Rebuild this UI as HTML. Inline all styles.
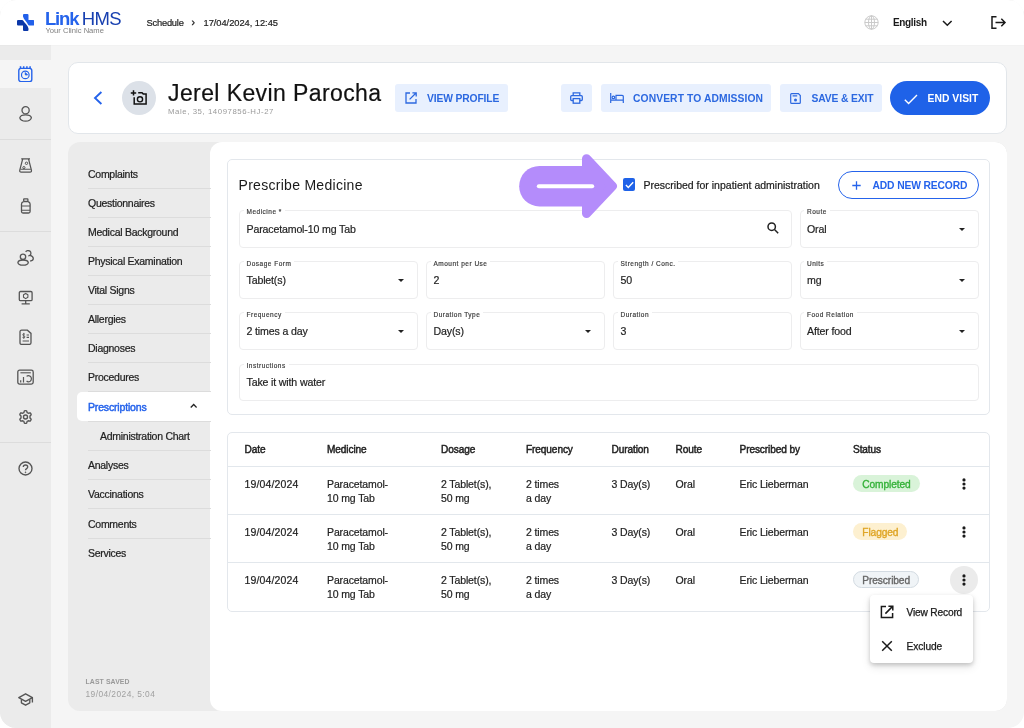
<!DOCTYPE html>
<html lang="en">
<head>
<meta charset="utf-8">
<title>Link HMS - Prescribe Medicine</title>
<style>
*{box-sizing:border-box;margin:0;padding:0}
html,body{width:1024px;height:728px;overflow:hidden;background:#fff}
body{font-family:"Liberation Sans",sans-serif;color:#1f1f1f;position:relative}
.abs{position:absolute}
#app{will-change:transform;position:absolute;left:0;top:0;width:1024px;height:728px;background:#f5f5f5;border-radius:16px;overflow:hidden}
#topbar{position:absolute;left:0;top:0;width:1024px;height:45px;background:#fff;z-index:2;box-shadow:0 0 1px rgba(0,0,0,.08)}
#rail{position:absolute;left:0;top:44px;width:51px;height:684px;background:#ebebeb}
#rail .active{position:absolute;left:0;top:15.8px;width:51px;height:28px;background:#f5f5f5}
#rail .sep{position:absolute;left:0;width:51px;height:1px;background:#dcdcdc}
#rail svg{position:absolute}
.t{position:absolute;white-space:nowrap;line-height:1}
#hcard{position:absolute;left:68px;top:62px;width:939px;height:71.5px;background:#fff;border:1px solid #e2e6ea;border-radius:10px}
#main{position:absolute;left:68px;top:142px;width:939px;height:569px;background:#ebebeb;border-radius:12px;overflow:hidden}
#content{position:absolute;left:142.4px;top:0;width:796.6px;height:569px;background:#fff;border-radius:12px}
.nav{position:absolute;left:88px;margin-top:.3px;font-size:10.5px;line-height:1;white-space:nowrap;color:#1f1f1f;letter-spacing:-.27px;-webkit-text-stroke:.22px #1f1f1f}
.navsep{position:absolute;left:88px;width:123px;height:1px;background:#dcdcdc}
.btn{position:absolute;height:28.5px;top:83.5px;background:#e8f0fe;border-radius:3px;color:#2c68e0;font-weight:bold;font-size:10.3px}
.card{position:absolute;left:227px;width:763px;background:#fff;border:1px solid #e3e7ec;border-radius:5px}
.fld{position:absolute;height:37.5px;border:1px solid #ededee;border-radius:4px;background:#fff}
.fld .lb{position:absolute;left:3.5px;top:-2.7px;padding:0 3px;background:#fff;font-size:6.5px;line-height:8px;color:#3a3a3a;white-space:nowrap;letter-spacing:.5px;-webkit-text-stroke:.18px #3a3a3a}
.fld .v{position:absolute;left:6.5px;top:11.8px;font-size:10.6px;line-height:12px;white-space:nowrap;color:#1f1f1f;letter-spacing:-.15px;-webkit-text-stroke:.2px #1f1f1f}
.fld .dd{position:absolute;right:12.6px;top:16.8px;width:0;height:0;border-left:3.8px solid transparent;border-right:3.8px solid transparent;border-top:3.7px solid #222}
.th{position:absolute;top:444.6px;font-size:10.1px;letter-spacing:-.1px;-webkit-text-stroke:.45px #222;line-height:1;white-space:nowrap;color:#222}
.td{position:absolute;margin-top:.4px;font-size:10.5px;line-height:14.25px;white-space:nowrap;color:#222;letter-spacing:-.12px;-webkit-text-stroke:.2px #222}
.rowsep{position:absolute;left:228px;width:761px;height:1px;background:#e2e7ec}
.chip{position:absolute;height:17px;border-radius:8.5px;font-size:10.2px;line-height:19.4px;padding:0 9.3px;white-space:nowrap;letter-spacing:-.1px}
</style>
</head>
<body>
<div id="app">
<div id="topbar">
<svg class="abs" style="left:17px;top:14px" width="17.2" height="17" viewBox="0 0 17.2 17"><path d="M6 1.1 Q6 0 7.1 0 H10.4 Q11.5 0 11.5 1.1 V5.9 H16.1 Q17.2 5.9 17.2 7 V10.5 Q17.2 11.6 16.1 11.6 H12.3 Q11.4 11.6 11 10.6 C10 8 6.4 5.5 6 2.6 Z" fill="#2160ea"/><path d="M1.1 5.9 H5.1 Q5.9 5.9 6.3 6.7 C7.5 9 11 11.3 11.5 14.4 V15.9 Q11.5 17 10.4 17 H7.1 Q6 17 6 15.9 V11.6 H1.1 Q0 11.6 0 10.5 V7 Q0 5.9 1.1 5.9 Z" fill="#0a37a8"/></svg>
<div class="t" style="left:45px;top:8.5px;font-size:18.5px;line-height:20px;font-weight:bold;color:#2563eb;letter-spacing:-1.2px">Link<span style="font-weight:normal;color:#1840b0;margin-left:3.4px;letter-spacing:-0.6px">HMS</span></div>
<div class="t" style="left:45.5px;top:26.5px;font-size:7.6px;line-height:8px;color:#808080">Your Clinic Name</div>
<div class="t" style="left:146.5px;top:17.5px;font-size:9.3px;line-height:10px;color:#222;letter-spacing:-.2px;-webkit-text-stroke:.2px #222">Schedule</div>
<div class="t" style="left:191.6px;top:15.9px;font-size:10.5px;line-height:12px;color:#222;-webkit-text-stroke:.3px #222">›</div>
<div class="t" style="left:203.5px;top:17.5px;font-size:9.3px;line-height:10px;color:#222;letter-spacing:-.03px;-webkit-text-stroke:.2px #222">17/04/2024, 12:45</div>
<svg class="abs" style="left:864px;top:15px" width="15" height="15" viewBox="0 0 15 15" fill="none" stroke="#c8c8c8" stroke-width="0.95"><circle cx="7.5" cy="7.5" r="6.7"/><ellipse cx="7.5" cy="7.5" rx="3" ry="6.7"/><path d="M0.8 7.5 H14.2 M1.7 4.2 H13.3 M1.7 10.8 H13.3 M7.5 0.8 V14.2"/></svg>
<div class="t" style="left:893px;top:17px;font-size:10px;line-height:11px;font-weight:bold;color:#1a1a1a;letter-spacing:-.35px">English</div>
<svg class="abs" style="left:942px;top:20px" width="11" height="7" viewBox="0 0 11 7" fill="none" stroke="#1a1a1a" stroke-width="1.5"><path d="M1 1 L5.3 5.3 L9.6 1"/></svg>
<svg class="abs" style="left:990px;top:15px" width="17" height="15" viewBox="0 0 17 15" fill="none" stroke="#1a1a1a" stroke-width="1.5"><path d="M6.5 1.7 H2 V13.3 H6.5"/><path d="M5.5 7.5 H15 M11.3 3.8 L15 7.5 L11.3 11.2"/></svg>
</div>
<div id="rail"><div class="active"></div>
<div class="sep" style="top:95px"></div><div class="sep" style="top:187px"></div><div class="sep" style="top:398px"></div>
<!-- schedule -->
<svg style="left:18.4px;top:21.7px" width="14.6" height="16.6" viewBox="0 0 14.6 16.6" fill="none" stroke="#2563eb" stroke-width="1.4"><rect x="0.8" y="2.4" width="13" height="13.2" rx="2.2"/><path d="M2.5 0.2 V3 M5.7 0.2 V3 M8.9 0.2 V3 M12.1 0.2 V3" stroke-width="1.5"/><circle cx="7.3" cy="8.9" r="3.8" stroke-width="1.2"/><path d="M7.3 6.6 V8.9 H9.5 Z" stroke-width="1" fill="#2563eb"/></svg>
<!-- person -->
<svg style="left:19px;top:62px" width="13.4" height="16" viewBox="0 0 13.4 16" fill="none" stroke="#555" stroke-width="1.3"><circle cx="6.6" cy="4.3" r="3.6"/><path d="M0.8 11.8 C1.4 9.6 4 8.9 6.6 8.9 C9.2 8.9 11.8 9.6 12.4 11.8 C11.8 14 9.2 15.1 6.6 15.1 C4 15.1 1.4 14 0.8 11.8 Z"/></svg>
<!-- flask -->
<svg style="left:19px;top:114px" width="14" height="15" viewBox="0 0 14 15" fill="none" stroke="#555" stroke-width="1.25"><path d="M2.2 0.9 H11"/><path d="M3.7 0.9 L0.8 12.2 Q0.4 14.2 2.2 14.2 H11 Q12.8 14.2 12.4 12.2 L9.5 0.9"/><path d="M1.4 11.3 H11.8" stroke-width="1.1"/><circle cx="7.5" cy="5.3" r="1.2" stroke-width="1"/><circle cx="4.9" cy="9.6" r="1.1" stroke-width="1"/></svg>
<!-- bottle -->
<svg style="left:20px;top:152.5px" width="11.6" height="17" viewBox="0 0 11.6 17" fill="none" stroke="#555" stroke-width="1.3"><rect x="3.7" y="1.9" width="4.2" height="2.6" rx="0.5"/><path d="M3.7 4.7 C2.4 5 1.5 5.7 1.5 7.1 V14.5 Q1.5 16 3 16 H8.6 Q10.1 16 10.1 14.5 V7.1 C10.1 5.7 9.2 5 7.9 4.7"/><path d="M1.5 9 H10.1 M1.5 13.2 H10.1" stroke-width="1.1"/></svg>
<!-- people -->
<svg style="left:17px;top:205.5px" width="17.4" height="16" viewBox="0 0 17.4 16" fill="none" stroke="#555" stroke-width="1.3"><circle cx="6" cy="6.8" r="2.7"/><path d="M0.9 12.6 C1.2 10.6 3.4 10 6 10 C8.6 10 11 10.6 11.3 12.6 C11 14.4 8.6 15.2 6 15.2 C3.4 15.2 1.2 14.4 0.9 12.6 Z"/><path d="M8.7 1.8 C9.5 0.5 11.6 0.2 12.9 1.1 C14.3 2.2 14.2 4.3 13 5.3 C12.5 5.7 11.9 5.9 11.3 5.9"/><path d="M13 5.3 C14.8 5.7 16.3 7 16.3 8.6 C16.3 10 14.8 10.9 13.2 11"/></svg>
<!-- monitor -->
<svg style="left:18px;top:244.5px" width="15.4" height="16" viewBox="0 0 15.4 16" fill="none" stroke="#555" stroke-width="1.3"><rect x="1.3" y="2.5" width="12.8" height="9.2" rx="1.2"/><path d="M7.7 11.8 V14.6 M3.6 14.8 H11.8"/><path d="M7.7 4.4 L9.9 5.7 V8.3 L7.7 9.6 L5.5 8.3 V5.7 Z" stroke-width="1.1" stroke-linejoin="round"/></svg>
<!-- invoice -->
<svg style="left:19px;top:284.5px" width="13.4" height="16.4" viewBox="0 0 13.4 16.4" fill="none" stroke="#555" stroke-width="1.3"><path d="M2.6 1.2 H8.4 L12 4.4 V13.8 Q12 15.4 10.4 15.4 H2.6 Q1 15.4 1 13.8 V2.8 Q1 1.2 2.6 1.2 Z"/><path d="M7.6 6 H10 M7.6 8.4 H10 M3.6 12 H10" stroke-width="1.1"/><path d="M5.8 5.2 C5.2 4.7 3.7 4.8 3.7 5.8 C3.7 7 5.9 6.6 5.9 7.9 C5.9 8.9 4.3 9.1 3.5 8.4 M4.8 3.9 V9.8" stroke-width="0.9"/></svg>
<!-- chart -->
<svg style="left:17px;top:324.5px" width="17" height="16.4" viewBox="0 0 17 16.4" fill="none" stroke="#555" stroke-width="1.3"><rect x="0.8" y="1.1" width="15.4" height="14" rx="1.8"/><path d="M3.4 3.8 H13.8" stroke-width="1.1"/><path d="M3.7 11.2 V13.4 M6.5 8 V13.4" stroke-width="1.2"/><path d="M9.6 7.4 C10.4 6.6 12 6.4 13.2 7.2 C14.8 8.4 14.8 11 13.2 12.2 C12 13 10.4 12.8 9.6 12" stroke-width="1.2"/></svg>
<!-- gear -->
<svg style="left:18px;top:364.5px" width="15" height="16" viewBox="0 0 24 24" fill="none" stroke="#555" stroke-width="2.2"><circle cx="12" cy="12" r="3.2"/><path d="M10.2 2.2 Q12 1.4 13.8 2.2 L14.6 4.9 L16.6 6 L19.3 5.3 Q20.9 6.5 21.1 8.4 L19.2 10.5 V13.5 L21.1 15.6 Q20.9 17.5 19.3 18.7 L16.6 18 L14.6 19.1 L13.8 21.8 Q12 22.6 10.2 21.8 L9.4 19.1 L7.4 18 L4.7 18.7 Q3.1 17.5 2.9 15.6 L4.8 13.5 V10.5 L2.9 8.4 Q3.1 6.5 4.7 5.3 L7.4 6 L9.4 4.9 Z" stroke-linejoin="round"/></svg>
<!-- help -->
<svg style="left:18px;top:417px" width="15" height="15" viewBox="0 0 15 15" fill="none" stroke="#555" stroke-width="1.35"><circle cx="7.5" cy="7.5" r="6.5"/><path d="M5.3 6 C5.3 3.3 9.7 3.3 9.7 6 C9.7 7.6 7.5 7.6 7.5 9.3" /><circle cx="7.5" cy="11.3" r="0.5" fill="#555" stroke-width="0.6"/></svg>
<!-- cap -->
<svg style="left:18px;top:649px" width="16" height="13" viewBox="0 0 16 13" fill="none" stroke="#555" stroke-width="1.35" stroke-linejoin="round"><path d="M7.6 0.8 L14.4 4.6 L7.6 8.4 L0.8 4.6 Z"/><path d="M3.4 6.4 V9.8 L7.6 12.2 L11.8 9.8 V6.4"/><path d="M14.4 4.8 V9.4"/></svg>
</div>
<div id="hcard"></div>
<svg class="abs" style="left:93px;top:91px" width="10" height="14" viewBox="0 0 10 14" fill="none" stroke="#2563eb" stroke-width="1.9"><path d="M8.4 1 L2 7 L8.4 13"/></svg>
<div class="abs" style="left:122.3px;top:80.7px;width:34px;height:34px;border-radius:50%;background:#dce1e8"></div>
<svg class="abs" style="left:130px;top:89px" width="18" height="17" viewBox="0 0 18 17" fill="none" stroke="#111" stroke-width="1.5"><path d="M3.5 1.2 V6.6 M0.8 3.9 H6.2"/><path d="M4.2 8.2 V14.9 H16.1 V4.9 H13.2 L12 3.8 H8.2"/><circle cx="10" cy="10.3" r="2.6" stroke-width="1.4"/></svg>
<div class="t" style="left:168px;top:79.2px;font-size:23px;line-height:28px;color:#111;letter-spacing:.4px;-webkit-text-stroke:.2px #111">Jerel Kevin Parocha</div>
<div class="t" style="left:168px;top:107px;font-size:7.8px;line-height:9px;color:#9a9a9a;letter-spacing:.57px">Male, 35, 14097856-HJ-27</div>
<div class="btn" style="left:395px;width:113px"><svg class="abs" style="left:10px;top:8.5px" width="12" height="12" viewBox="0 0 12 12" fill="none" stroke="#2c68e0" stroke-width="1.3"><path d="M5 1 H1 V11 H11 V7"/><path d="M7.4 0.8 H11.2 V4.6 M11 1 L4.6 7.4"/></svg><span class="t" style="left:32px;top:10.2px;letter-spacing:-.13px">VIEW PROFILE</span></div>
<div class="btn" style="left:561px;width:31px"><svg class="abs" style="left:9px;top:8.5px" width="13" height="12" viewBox="0 0 13 12" fill="none" stroke="#2c68e0" stroke-width="1.3"><path d="M3.2 3.6 V0.8 H9.8 V3.6"/><rect x="0.7" y="3.7" width="11.6" height="4.8" rx="1"/><rect x="3.2" y="6.6" width="6.6" height="4.6" fill="#e8f0fe"/></svg></div>
<div class="btn" style="left:601px;width:170px"><svg class="abs" style="left:9px;top:9.5px" width="14" height="10" viewBox="0 0 14 10" fill="none" stroke="#2c68e0" stroke-width="1.2"><path d="M0.7 0 V10 M0.7 7.2 H13.3 V10 M13.3 7.2 V3.6 Q13.3 2.4 12.1 2.4 H6 V7"/><circle cx="3.4" cy="4.4" r="1.3"/></svg><span class="t" style="left:32px;top:10.2px;letter-spacing:.1px">CONVERT TO ADMISSION</span></div>
<div class="btn" style="left:779.5px;width:102.5px"><svg class="abs" style="left:10px;top:9px" width="11" height="11" viewBox="0 0 11 11" fill="none" stroke="#2c68e0" stroke-width="1.2"><path d="M0.7 1.6 Q0.7 0.7 1.6 0.7 H8.4 L10.3 2.6 V9.4 Q10.3 10.3 9.4 10.3 H1.6 Q0.7 10.3 0.7 9.4 Z"/><path d="M2.6 2.9 H7.2" stroke-width="1.4"/><circle cx="5.5" cy="6.9" r="1.5" fill="#2c68e0" stroke="none"/></svg><span class="t" style="left:32px;top:10.2px;letter-spacing:-.12px">SAVE &amp; EXIT</span></div>
<div class="abs" style="left:890px;top:80.5px;width:100px;height:34.5px;border-radius:18px;background:#1f62e8"><svg class="abs" style="left:13.5px;top:13px" width="14" height="11" viewBox="0 0 14 11" fill="none" stroke="#fff" stroke-width="1.4"><path d="M0.8 5.8 L4.6 9.4 L13 1"/></svg><span class="t" style="left:37.5px;top:13.2px;color:#fff;font-weight:bold;font-size:10.3px;letter-spacing:.06px">END VISIT</span></div>
<div id="main"><div id="content"></div></div>
<div class="abs" style="left:76.5px;top:392px;width:140px;height:29px;background:#fff;border-radius:5px"></div>
<div class="nav" style="top:168.6px">Complaints</div>
<div class="nav" style="top:197.6px">Questionnaires</div>
<div class="nav" style="top:226.6px">Medical Background</div>
<div class="nav" style="top:255.4px">Physical Examination</div>
<div class="nav" style="top:284.6px">Vital Signs</div>
<div class="nav" style="top:313.8px">Allergies</div>
<div class="nav" style="top:342.9px">Diagnoses</div>
<div class="nav" style="top:372.1px">Procedures</div>
<div class="nav" style="top:401.8px;color:#2563eb;letter-spacing:-.17px;-webkit-text-stroke:.45px #2563eb">Prescriptions</div>
<div class="nav" style="top:430.7px;left:100px">Administration Chart</div>
<div class="nav" style="top:460px">Analyses</div>
<div class="nav" style="top:488.6px">Vaccinations</div>
<div class="nav" style="top:518.8px">Comments</div>
<div class="nav" style="top:547.4px">Services</div>
<div class="navsep" style="top:187.5px"></div>
<div class="navsep" style="top:216.8px"></div>
<div class="navsep" style="top:245.9px"></div>
<div class="navsep" style="top:275.0px"></div>
<div class="navsep" style="top:304.1px"></div>
<div class="navsep" style="top:333.3px"></div>
<div class="navsep" style="top:362.3px"></div>
<div class="navsep" style="top:391px"></div>
<div class="navsep" style="top:421px"></div>
<div class="navsep" style="top:449.7px"></div>
<div class="navsep" style="top:479.1px"></div>
<div class="navsep" style="top:508px"></div>
<div class="navsep" style="top:537.9px"></div>
<svg class="abs" style="left:189.7px;top:403.4px" width="7.4" height="5.6" viewBox="0 0 8 6" fill="none" stroke="#222" stroke-width="1.4"><path d="M0.8 4.8 L4 1.6 L7.2 4.8"/></svg>
<div class="t" style="left:85.5px;top:678.3px;font-size:6.9px;line-height:7px;color:#999;letter-spacing:.1px;font-weight:bold">LAST SAVED</div>
<div class="t" style="left:85.5px;top:689.9px;font-size:8.4px;line-height:9px;color:#a0a0a0;letter-spacing:.43px">19/04/2024, 5:04</div>
<div class="card" style="top:159px;height:256px"></div>
<div class="t" style="left:238.5px;top:177px;font-size:14px;line-height:16px;color:#1a1a1a;letter-spacing:.29px">Prescribe Medicine</div>
<svg class="abs" style="left:516px;top:151px;z-index:5" width="104" height="70" viewBox="516 151 104 70"><path d="M539.4 165.9 H586 V206.4 H539.4 A20.25 20.25 0 0 1 539.4 165.9 Z" fill="#b48cfb"/><path d="M586.5 158.7 L612.4 186.15 L586.5 213.6 Z" fill="#b48cfb" stroke="#b48cfb" stroke-width="9" stroke-linejoin="round"/><path d="M538.8 186.25 H592.2" stroke="#fff" stroke-width="4" stroke-linecap="round"/></svg>
<div class="abs" style="left:622.7px;top:178.4px;width:12.8px;height:12.8px;border-radius:2px;background:#1f62e8"><svg class="abs" style="left:2px;top:2.6px" width="9" height="8" viewBox="0 0 9 8" fill="none" stroke="#fff" stroke-width="1.4"><path d="M0.9 4 L3.3 6.4 L8.2 1.2"/></svg></div>
<div class="t" style="left:643.5px;top:178.7px;font-size:10.5px;line-height:12px;color:#1a1a1a;-webkit-text-stroke:.2px #1a1a1a">Prescribed for inpatient administration</div>
<div class="abs" style="left:837.5px;top:171px;width:141px;height:28px;border:1.4px solid #2563eb;border-radius:14px;background:#fff"><svg class="abs" style="left:13.5px;top:9px" width="9" height="9" viewBox="0 0 9 9" stroke="#2563eb" stroke-width="1.3"><path d="M4.5 0.3 V8.7 M0.3 4.5 H8.7"/></svg><span class="t" style="left:34px;top:8.5px;color:#2563eb;font-weight:bold;font-size:10.3px;letter-spacing:-.13px">ADD NEW RECORD</span></div>
<div class="fld" style="left:239px;top:210px;width:552.5px"><span class="lb">Medicine *</span><span class="v">Paracetamol-10 mg Tab</span><svg class="abs" style="right:11.2px;top:10.9px" width="12" height="12" viewBox="0 0 12 12" fill="none" stroke="#222" stroke-width="1.5"><circle cx="4.7" cy="4.7" r="3.7"/><path d="M7.5 7.5 L11.2 11.2"/></svg></div>
<div class="fld" style="left:799.5px;top:210px;width:179px"><span class="lb">Route</span><span class="v">Oral</span><i class="dd"></i></div>
<div class="fld" style="left:239px;top:261.2px;width:178.5px"><span class="lb">Dosage Form</span><span class="v">Tablet(s)</span><i class="dd"></i></div>
<div class="fld" style="left:426px;top:261.2px;width:178.5px"><span class="lb">Amount per Use</span><span class="v">2</span></div>
<div class="fld" style="left:613px;top:261.2px;width:178.5px"><span class="lb">Strength / Conc.</span><span class="v">50</span></div>
<div class="fld" style="left:799.5px;top:261.2px;width:179px"><span class="lb">Units</span><span class="v">mg</span><i class="dd"></i></div>
<div class="fld" style="left:239px;top:312.4px;width:178.5px"><span class="lb">Frequency</span><span class="v">2 times a day</span><i class="dd"></i></div>
<div class="fld" style="left:426px;top:312.4px;width:178.5px"><span class="lb">Duration Type</span><span class="v">Day(s)</span><i class="dd"></i></div>
<div class="fld" style="left:613px;top:312.4px;width:178.5px"><span class="lb">Duration</span><span class="v">3</span></div>
<div class="fld" style="left:799.5px;top:312.4px;width:179px"><span class="lb">Food Relation</span><span class="v">After food</span><i class="dd"></i></div>
<div class="fld" style="left:239px;top:363.6px;width:739.5px"><span class="lb">Instructions</span><span class="v">Take it with water</span></div>
<div class="card" style="top:432px;height:180px"></div>
<div class="th" style="left:244.5px">Date</div>
<div class="th" style="left:327px">Medicine</div>
<div class="th" style="left:441px">Dosage</div>
<div class="th" style="left:526px">Frequency</div>
<div class="th" style="left:611.5px">Duration</div>
<div class="th" style="left:675.5px">Route</div>
<div class="th" style="left:739.5px">Prescribed by</div>
<div class="th" style="left:853px">Status</div>
<div class="rowsep" style="top:465.5px"></div>
<div class="rowsep" style="top:514px"></div>
<div class="rowsep" style="top:562px"></div>
<div class="td" style="left:244.5px;top:476.2px;letter-spacing:.15px">19/04/2024</div>
<div class="td" style="left:327px;top:476.2px">Paracetamol-<br>10 mg Tab</div>
<div class="td" style="left:441px;top:476.2px">2 Tablet(s),<br>50 mg</div>
<div class="td" style="left:526px;top:476.2px">2 times<br>a day</div>
<div class="td" style="left:611.5px;top:476.2px">3 Day(s)</div>
<div class="td" style="left:675.5px;top:476.2px">Oral</div>
<div class="td" style="left:739.5px;top:476.2px">Eric Lieberman</div>
<div class="chip" style="left:853px;top:474.9px;width:66.5px;background:#d9f3d9;color:#36b23a;-webkit-text-stroke:.35px #36b23a">Completed</div>
<svg class="abs" style="left:962.3px;top:478px" width="4" height="12" viewBox="0 0 4 12" fill="#1a1a1a"><circle cx="2" cy="1.9" r="1.6"/><circle cx="2" cy="6" r="1.6"/><circle cx="2" cy="10.1" r="1.6"/></svg>
<div class="td" style="left:244.5px;top:524.4px;letter-spacing:.15px">19/04/2024</div>
<div class="td" style="left:327px;top:524.4px">Paracetamol-<br>10 mg Tab</div>
<div class="td" style="left:441px;top:524.4px">2 Tablet(s),<br>50 mg</div>
<div class="td" style="left:526px;top:524.4px">2 times<br>a day</div>
<div class="td" style="left:611.5px;top:524.4px">3 Day(s)</div>
<div class="td" style="left:675.5px;top:524.4px">Oral</div>
<div class="td" style="left:739.5px;top:524.4px">Eric Lieberman</div>
<div class="chip" style="left:853px;top:523.2px;width:53.5px;background:#fdf0d0;color:#dfa525;-webkit-text-stroke:.35px #dfa525">Flagged</div>
<svg class="abs" style="left:962.3px;top:526.2px" width="4" height="12" viewBox="0 0 4 12" fill="#1a1a1a"><circle cx="2" cy="1.9" r="1.6"/><circle cx="2" cy="6" r="1.6"/><circle cx="2" cy="10.1" r="1.6"/></svg>
<div class="td" style="left:244.5px;top:572.7px;letter-spacing:.15px">19/04/2024</div>
<div class="td" style="left:327px;top:572.7px">Paracetamol-<br>10 mg Tab</div>
<div class="td" style="left:441px;top:572.7px">2 Tablet(s),<br>50 mg</div>
<div class="td" style="left:526px;top:572.7px">2 times<br>a day</div>
<div class="td" style="left:611.5px;top:572.7px">3 Day(s)</div>
<div class="td" style="left:675.5px;top:572.7px">Oral</div>
<div class="td" style="left:739.5px;top:572.7px">Eric Lieberman</div>
<div class="chip" style="left:853px;top:571px;width:66px;background:#f0f4f7;color:#666;border:1px solid #d3dbe2;line-height:17.4px;padding:0 8.3px;-webkit-text-stroke:.35px #666">Prescribed</div>
<div class="abs" style="left:950px;top:565.8px;width:28.4px;height:28.4px;border-radius:50%;background:#ebebeb"></div>
<svg class="abs" style="left:962.3px;top:574.3px" width="4" height="12" viewBox="0 0 4 12" fill="#1a1a1a"><circle cx="2" cy="1.9" r="1.6"/><circle cx="2" cy="6" r="1.6"/><circle cx="2" cy="10.1" r="1.6"/></svg>
<div class="abs" style="left:869.5px;top:594.8px;width:103.5px;height:68px;background:#fff;border-radius:4px;box-shadow:0 2px 4px rgba(0,0,0,.18),0 4px 10px rgba(0,0,0,.10)"></div>
<svg class="abs" style="left:880px;top:604.5px" width="14" height="14" viewBox="0 0 14 14" fill="none" stroke="#1a1a1a" stroke-width="1.5"><path d="M6 1.4 H1.4 V12.6 H12.6 V8"/><path d="M8.4 1.2 H12.8 V5.6 M12.6 1.4 L5.4 8.6"/></svg>
<div class="t" style="left:906.5px;top:606.5px;font-size:10.2px;line-height:12px;color:#1a1a1a;letter-spacing:-.18px;-webkit-text-stroke:.25px #1a1a1a">View Record</div>
<svg class="abs" style="left:881px;top:640px" width="12" height="12" viewBox="0 0 12 12" fill="none" stroke="#1a1a1a" stroke-width="1.5"><path d="M1.2 1.2 L10.8 10.8 M10.8 1.2 L1.2 10.8"/></svg>
<div class="t" style="left:906.5px;top:640.6px;font-size:10.2px;line-height:12px;color:#1a1a1a;letter-spacing:-.08px;-webkit-text-stroke:.25px #1a1a1a">Exclude</div>
</div>
</body>
</html>
